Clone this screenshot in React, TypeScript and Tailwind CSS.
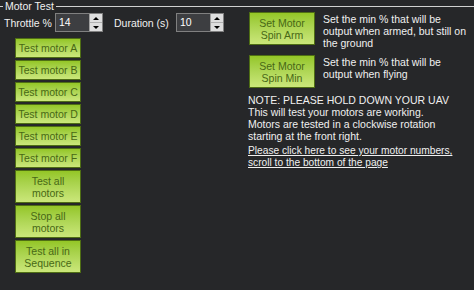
import React from "react";

const font = { fontFamily: '"Liberation Sans", Arial, sans-serif' };

function Spinner({ value, width }: { value: string; width: string }) {
  return (
    <div className={`${width} h-[19px] flex border border-[#808080] bg-[#3d3e41]`}>
      <div className="flex-1 pl-[3px] text-[10.5px] leading-[17px] text-white">{value}</div>
      <div className="w-[13px] flex flex-col bg-[#dedede] border-l border-[#a0a0a0]">
        <div className="flex-1 flex items-center justify-center border-b border-[#b0b0b0]">
          <div className="w-0 h-0 border-l-[3px] border-r-[3px] border-b-[3px] border-l-transparent border-r-transparent border-b-black" />
        </div>
        <div className="flex-1 flex items-center justify-center">
          <div className="w-0 h-0 border-l-[3px] border-r-[3px] border-t-[3px] border-l-transparent border-r-transparent border-t-black" />
        </div>
      </div>
    </div>
  );
}

function GreenButton({ label, tall }: { label: React.ReactNode; tall?: boolean }) {
  return (
    <div
      className={`w-[66px] ${tall ? "h-[33px]" : "h-[20px]"} flex items-center justify-center text-center border border-[#4f6e14] bg-gradient-to-b from-[#94c625] to-[#cbe77a] text-[#486816] text-[10.5px] leading-[12px]`}
    >
      {label}
    </div>
  );
}

export default function App() {
  const motors = ["A", "B", "C", "D", "E", "F"];
  return (
    <div style={font} className="w-[474px] h-[290px] bg-[#262729] overflow-hidden text-[#f0f0f0] text-[10.5px] leading-[12px]">
      <div className="h-[12px] flex items-center">
        <div className="w-[3px] h-px bg-[#d0d0d0]" />
        <span className="px-[2px] leading-[12px]">Motor Test</span>
        <div className="flex-1 h-px bg-[#d0d0d0]" />
      </div>
      <div className="flex">
        <div className="w-[249px] shrink-0">
          <div className="flex items-center mt-[1px] h-[19px]">
            <span className="ml-[4px] w-[51px]">Throttle %</span>
            <Spinner value="14" width="w-[48px]" />
            <span className="ml-[11px] w-[62px]">Duration (s)</span>
            <Spinner value="10" width="w-[48px]" />
          </div>
          <div className="ml-[15px] mt-[6px] flex flex-col gap-[2px]">
            {motors.map((m) => (
              <GreenButton key={m} label={`Test motor ${m}`} />
            ))}
            <GreenButton tall label={<>Test all<br />motors</>} />
            <GreenButton tall label={<>Stop all<br />motors</>} />
            <GreenButton tall label={<>Test all in<br />Sequence</>} />
          </div>
        </div>
        <div className="flex-1">
          <div className="flex">
            <div className="h-[36px] flex">
              <GreenButton tall label={<>Set Motor<br />Spin Arm</>} />
            </div>
            <div className="ml-[8px] mt-[1px] whitespace-nowrap">
              Set the min % that will be
              <br />
              output when armed, but still on
              <br />
              the ground
            </div>
          </div>
          <div className="flex mt-[6px]">
            <div className="h-[36px] flex">
              <GreenButton tall label={<>Set Motor<br />Spin Min</>} />
            </div>
            <div className="ml-[8px] mt-[1px] whitespace-nowrap">
              Set the min % that will be
              <br />
              output when flying
            </div>
          </div>
          <div className="mt-[3px] -ml-[1px]">
            <div>NOTE: PLEASE HOLD DOWN YOUR UAV</div>
            <div>This will test your motors are working.</div>
            <div>Motors are tested in a clockwise rotation</div>
            <div>starting at the front right.</div>
            <div className="mt-[3px] underline text-[10.2px]">
              Please click here to see your motor numbers,
              <br />
              scroll to the bottom of the page
            </div>
          </div>
        </div>
      </div>
    </div>
  );
}
